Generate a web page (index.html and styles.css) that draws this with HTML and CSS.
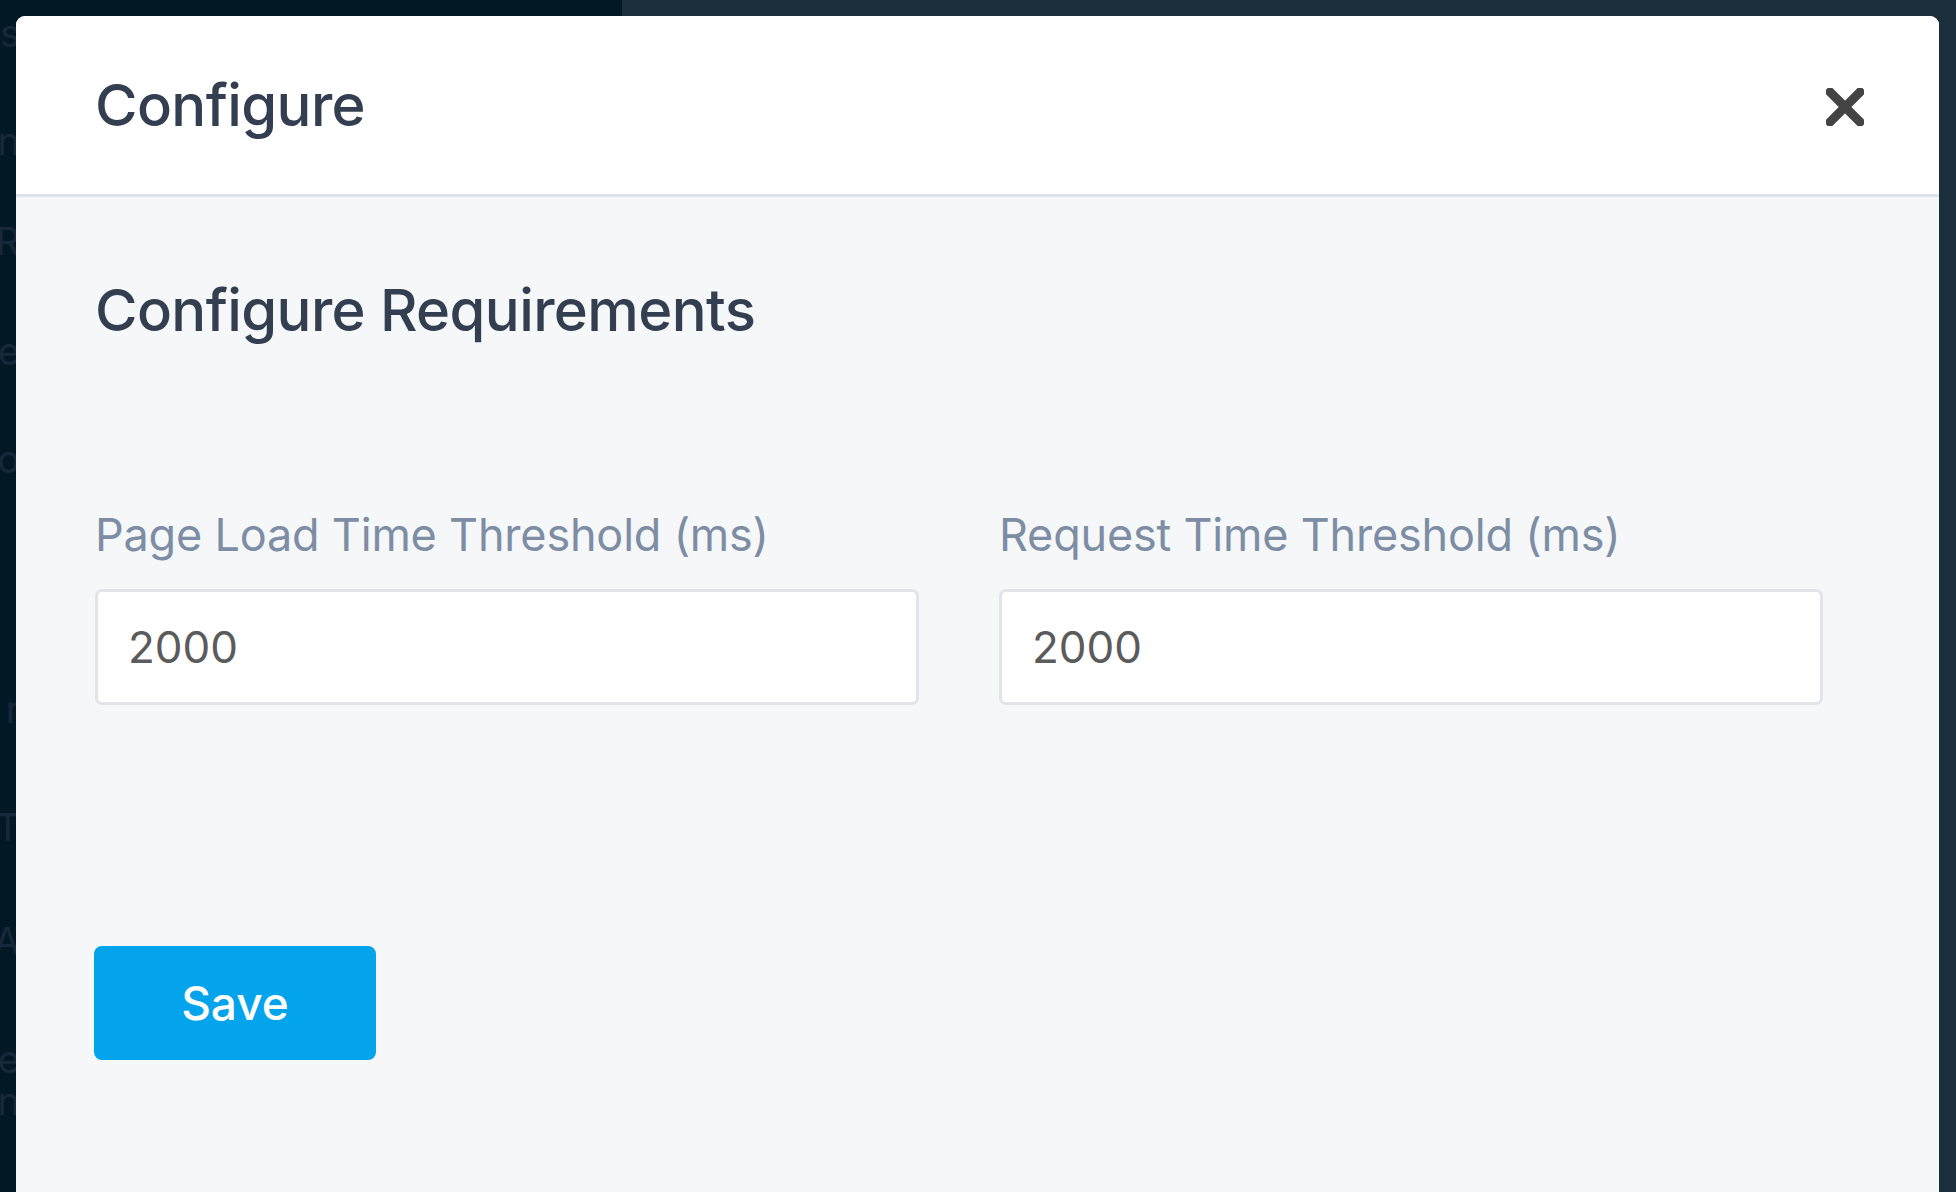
FILE: index.html
```html
<!DOCTYPE html>
<html lang="en">
<head>
<meta charset="utf-8">
<title>Configure</title>
<link rel="stylesheet" href="styles.css">
</head>
<body>
<div class="backdrop">
  <div class="backdrop-left">
    <div class="ghost-col">
      <span class="ghost g1">s</span>
      <span class="ghost g2">n</span>
      <span class="ghost g3">R</span>
      <span class="ghost g4">e</span>
      <span class="ghost g5">o</span>
      <span class="ghost g6">r</span>
      <span class="ghost g7">T</span>
      <span class="ghost g8">A</span>
      <span class="ghost g9">e</span>
      <span class="ghost g10">n</span>
    </div>
  </div>
  <div class="backdrop-right"></div>
</div>

<div class="modal">
  <div class="modal-header">
    <h1 class="modal-title">Configure</h1>
    <button class="close-btn" aria-label="Close">
      <svg width="38" height="38" viewBox="0 0 38 38">
        <path d="M4 4 L34 34 M34 4 L4 34" stroke="#444444" stroke-width="9" stroke-linecap="square" fill="none"/>
      </svg>
    </button>
  </div>
  <div class="modal-body">
    <h2 class="section-title">Configure Requirements</h2>
    <div class="fields">
      <div class="field">
        <label class="field-label">Page Load Time Threshold (ms)</label>
        <div class="input">2000</div>
      </div>
      <div class="field">
        <label class="field-label">Request Time Threshold (ms)</label>
        <div class="input">2000</div>
      </div>
    </div>
    <button class="save-btn">Save</button>
  </div>
</div>
</body>
</html>
```

FILE: styles.css
```css
html, body {
  margin: 0;
  padding: 0;
  height: 100%;
  overflow: hidden;
}
body {
  font-family: "Inter", "Noto Sans", sans-serif;
  background: #021824;
  position: relative;
}
.backdrop {
  display: flex;
  height: 100%;
}
.backdrop-left {
  width: 622px;
  background: #021824;
  overflow: hidden;
}
.backdrop-right {
  flex: 1;
  background: #1a2e3c;
}
.ghost-col {
  display: flex;
  flex-direction: column;
  align-items: flex-end;
  width: 16px;
  color: #17283a;
  font-size: 38px;
  line-height: 1;
}
.ghost { display: block; margin-right: -4px; }
.g1 { margin-top: 14px; }
.g2 { margin-top: 70px; }
.g3 { margin-top: 62px; }
.g4 { margin-top: 72px; }
.g5 { margin-top: 70px; }
.g6 { margin-top: 212px; }
.g7 { margin-top: 80px; }
.g8 { margin-top: 76px; }
.g9 { margin-top: 80px; }
.g10 { margin-top: 4px; }

.modal {
  position: absolute;
  left: 16px;
  top: 16px;
  width: 1923px;
  height: 1176px;
  background: #f6f7f9;
  border-radius: 9px 9px 0 0;
  overflow: hidden;
  display: flex;
  flex-direction: column;
}
.modal-header {
  height: 178px;
  background: #ffffff;
  border-bottom: 3px solid #e1e3ea;
  display: flex;
  align-items: center;
  justify-content: space-between;
  padding: 0 75px 0 79px;
  box-sizing: content-box;
}
.modal-title {
  margin: 0;
  font-size: 58px;
  font-weight: 500;
  line-height: 1;
  letter-spacing: -0.6px;
  color: #333e50;
}
.close-btn {
  border: 0;
  background: none;
  padding: 0;
  width: 38px;
  height: 38px;
  margin-top: 4px;
  display: flex;
}
.modal-body {
  padding: 84px 116px 0 79px;
  display: flex;
  flex-direction: column;
  align-items: flex-start;
}
.section-title {
  margin: 0;
  font-size: 58px;
  font-weight: 500;
  line-height: 1;
  letter-spacing: -0.6px;
  color: #333e50;
}
.fields {
  margin-top: 173px;
  display: grid;
  grid-template-columns: 1fr 1fr;
  column-gap: 80px;
  width: 100%;
}
.field {
  display: flex;
  flex-direction: column;
}
.field-label {
  font-size: 45px;
  line-height: 1;
  letter-spacing: -0.2px;
  color: #7d8da4;
  font-weight: 400;
  height: 45px;
}
.input {
  margin-top: 32px;
  height: 116px;
  box-sizing: border-box;
  background: #ffffff;
  border: 3px solid #e2e4e9;
  border-radius: 7px;
  display: flex;
  align-items: center;
  padding-left: 30px;
  font-size: 44px;
  color: #5b5b5b;
}
.save-btn {
  margin-top: 241px;
  width: 282px;
  height: 114px;
  border: 0;
  border-radius: 8px;
  background: #03a4ec;
  color: #ffffff;
  font-family: "Inter", "Noto Sans", sans-serif;
  font-size: 46px;
  font-weight: 500;
  padding: 0;
  margin-left: -1px;
}
```
